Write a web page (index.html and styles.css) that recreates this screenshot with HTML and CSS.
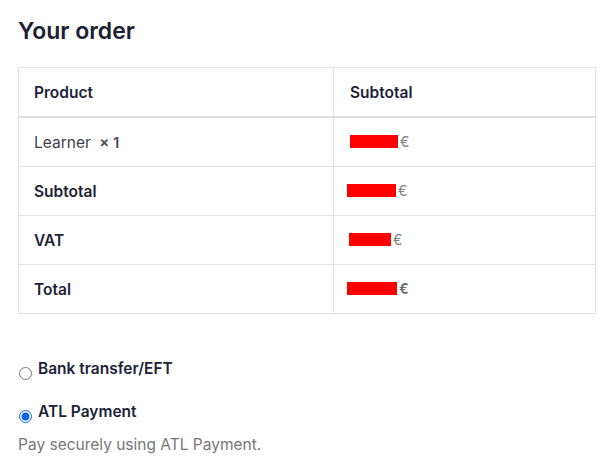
FILE: index.html
```html
<!DOCTYPE html>
<html>
<head>
<meta charset="utf-8">
<link rel="stylesheet" href="styles.css">
</head>
<body>
<div class="page">
  <h3 class="title">Your order</h3>
  <table class="order">
    <thead>
      <tr><th class="c1">Product</th><th class="c2">Subtotal</th></tr>
    </thead>
    <tbody>
      <tr><td class="c1 item">Learner <strong class="qty">× 1</strong></td><td class="c2"><span class="amount"><span class="red w48"></span><span class="cur">€</span></span></td></tr>
    </tbody>
    <tfoot>
      <tr><th class="c1">Subtotal</th><td class="c2"><span class="amount shift"><span class="red w49"></span><span class="cur">€</span></span></td></tr>
      <tr><th class="c1">VAT</th><td class="c2"><span class="amount shift2"><span class="red w42"></span><span class="cur">€</span></span></td></tr>
      <tr><th class="c1">Total</th><td class="c2"><strong class="amount shift"><span class="red w50"></span><span class="cur bold">€</span></strong></td></tr>
    </tfoot>
  </table>
  <ul class="methods">
    <li class="method"><label class="opt"><input type="radio" name="pm" class="radio"><span>Bank transfer/EFT</span></label></li>
    <li class="method"><label class="opt"><input type="radio" name="pm" class="radio" checked><span>ATL Payment</span></label>
      <p class="desc">Pay securely using ATL Payment.</p>
    </li>
  </ul>
</div>
</body>
</html>
```
FILE: styles.css
```css
html, body { margin: 0; padding: 0; background: #fff; }
body { font-family: Inter, Lato, sans-serif; color: #1d2336; }
.page { padding: 0 16px 0 18px; }
.title { margin: 0; padding-top: 17px; font-size: 23px; font-weight: 600; line-height: 28px; letter-spacing: 0; color: #1b2133; }
.order { margin-top: 22px; width: 578px; border-collapse: collapse; border: 1px solid #e1e1e6; font-size: 15.5px; }
.order th, .order td { border: 1px solid #e1e1e6; text-align: left; padding: 0 15px; height: 48px; vertical-align: middle; }
.order thead th { border-bottom: 2px solid #dcdce2; height: 48px; }
.order th { font-weight: 600; color: #1d2336; }
.c1 { width: 284px; }
.c2 { padding-left: 16px !important; }
.item { color: #3d3f4a; font-weight: 400; }
.qty { margin-left: 4px; font-weight: 600; color: #4b4e59; font-size: 15px; }
.amount { display: inline-flex; align-items: center; gap: 2px; color: #777; }
.shift { margin-left: -3px; }
.shift2 { margin-left: -1px; }
.red { display: inline-block; height: 13px; background: #ff0000; }
.w48 { width: 48px; }
.w49 { width: 49px; }
.w42 { width: 42px; }
.w50 { width: 50px; }
.cur { font-size: 14px; color: #808080; }
.cur.bold { font-weight: 700; color: #6d6f78; }
.methods { list-style: none; margin: 44px 0 0; padding: 0; }
.method { margin: 0 0 21px; }
.opt { display: flex; align-items: center; font-weight: 600; font-size: 15.5px; line-height: 22px; color: #1d2336; }
.radio { margin: 8px 6px 0 1px; width: 13px; height: 13px; accent-color: #0b64e6; }
.desc { margin: 11px 0 0; color: #76767a; font-size: 15.5px; line-height: 22px; }
```
